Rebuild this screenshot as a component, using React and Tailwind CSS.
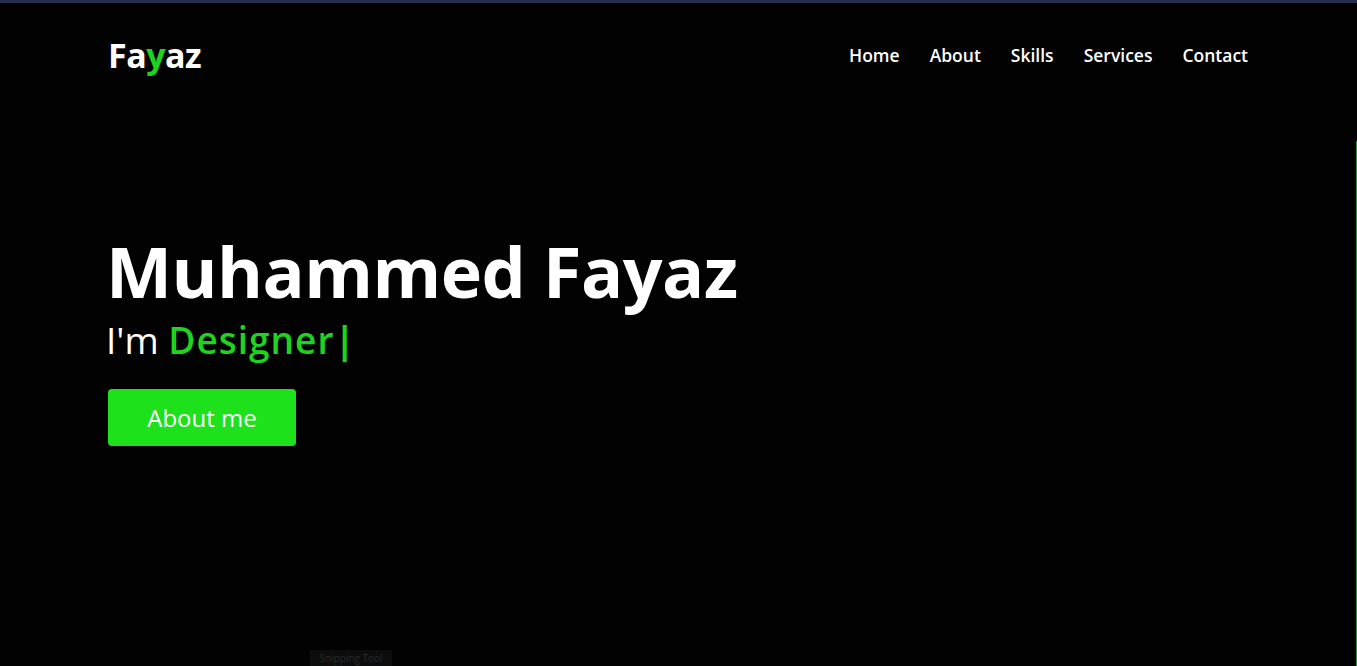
const links = ["Home", "About", "Skills", "Services", "Contact"];

const App = () => {
    return (
        <div
            className="relative h-[666px] w-full overflow-hidden bg-[#020202] text-white"
            style={{ fontFamily: '"Open Sans", "Noto Sans", sans-serif' }}
        >
            <div className="h-[3px] bg-[#26314d]" />

            <nav className="flex items-center justify-between pl-[108px] pr-[109px] pt-[32px]">
                <a className="text-[34px] font-bold tracking-[-0.5px] leading-[40px]">
                    Fa<span className="text-[#1ed41e]">y</span>az
                </a>
                <ul className="flex items-center gap-[30px]">
                    {links.map((link) => (
                        <li
                            key={link}
                            className="text-[17.5px] font-semibold leading-[40px]"
                        >
                            {link}
                        </li>
                    ))}
                </ul>
            </nav>

            <section className="pl-[106px] pt-[159px]">
                <h1 className="text-[70px] font-bold leading-[74px] tracking-[-0.5px]">
                    Muhammed Fayaz
                </h1>
                <h2 className="mt-[7px] text-[37px] leading-[50px]">
                    I'm{" "}
                    <span className="font-semibold tracking-[1px] text-[#1ed41e]">
                        Designer
                    </span>
                    <span className="font-bold text-[#1ed41e]">|</span>
                </h2>
                <button className="mt-[24px] ml-[2px] h-[57px] w-[188px] rounded-[4px] bg-[#1de11b] text-[24px] text-white">
                    About me
                </button>
            </section>

            <div className="absolute right-0 top-[141px] bottom-0 w-px bg-[#1f9a3a]" />
            <div className="absolute left-[310px] top-[650px] h-[16px] w-[82px] bg-[#0d0d0d] text-[10px] leading-[16px] text-[#2a2a2a] text-center">
                Snipping Tool
            </div>
        </div>
    );
};

export default App;
